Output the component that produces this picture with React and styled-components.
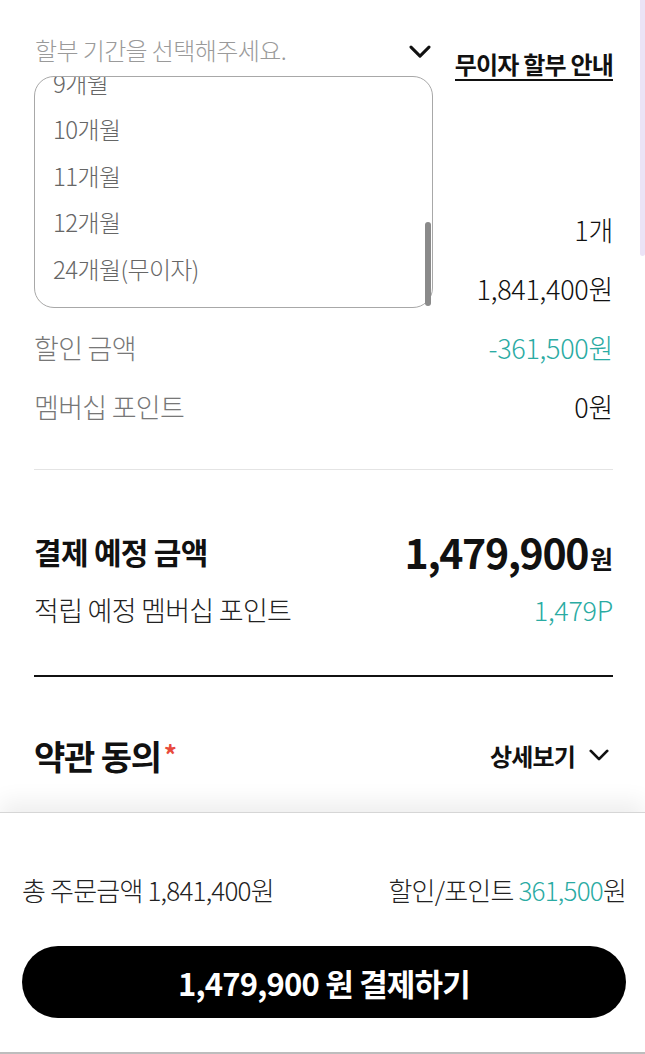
import React, { useLayoutEffect, useRef } from "react";
import styled, { createGlobalStyle } from "styled-components";

const GlobalStyle = createGlobalStyle`
  html, body {
    margin: 0;
    padding: 0;
    background: #fff;
  }
  body {
    font-family: "Noto Sans CJK KR", "Noto Sans", sans-serif;
    font-weight: 300;
    color: #111;
    overflow: hidden;
  }
  * { box-sizing: border-box; }
`;

const Page = styled.div`
  position: relative;
  width: 645px;
  height: 1054px;
  overflow: hidden;
  display: flex;
  flex-direction: column;
  background: #fff;
`;

const ScrollArea = styled.div`
  flex: 1;
  overflow: hidden;
  padding: 20px 32px 0 34px;
`;

const PageThumb = styled.div`
  position: absolute;
  top: 0;
  right: 0;
  width: 5px;
  height: 256px;
  background: #ebe3f6;
  border-radius: 0 0 3px 3px;
`;

const InstallRow = styled.div`
  display: flex;
  align-items: flex-end;
  justify-content: space-between;
  height: 60px;
`;

const SelectBox = styled.div`
  width: 399px;
  height: 60px;
  display: flex;
  align-items: center;
  justify-content: space-between;
  padding: 0 2px 2px 1px;

  svg {
    margin-top: 6px;
  }
`;

const Placeholder = styled.span`
  font-size: 24px;
  letter-spacing: -0.6px;
  color: #9a9a9a;
`;

const InfoLink = styled.a`
  font-size: 24px;
  font-weight: 700;
  letter-spacing: -0.8px;
  color: #111;
  text-decoration: none;
  line-height: 28px;
  padding-bottom: 1px;
  border-bottom: 2px solid #111;
  margin-bottom: -1px;
`;

const Dropdown = styled.div`
  position: absolute;
  top: 76px;
  left: 34px;
  width: 399px;
  height: 232px;
  background: #fff;
  border: 1px solid #a8a8a8;
  border-radius: 20px;
  z-index: 2;
`;

const OptionList = styled.ul`
  list-style: none;
  margin: 0;
  padding: 0 0 15px;
  height: 100%;
  overflow-y: scroll;
  border-radius: 20px;
  scrollbar-width: none;
  &::-webkit-scrollbar { display: none; }
`;

const Option = styled.li`
  height: 46.5px;
  display: flex;
  align-items: center;
  padding-left: 18px;
  font-size: 24px;
  letter-spacing: -0.6px;
  color: #666;
`;

const ListThumb = styled.div`
  position: absolute;
  right: 1px;
  bottom: 1px;
  width: 6px;
  height: 84px;
  background: #8a8a8a;
  border-radius: 3px;
`;

const Heading = styled.div`
  height: 120px;
  display: flex;
  align-items: center;
  font-size: 24px;
  font-weight: 700;
`;

const Row = styled.div`
  display: flex;
  align-items: center;
  justify-content: space-between;
  height: 59px;
`;

const Label = styled.span`
  font-size: ${(p) => (p.$big ? "30px" : "27px")};
  font-weight: ${(p) => (p.$big ? 700 : 300)};
  letter-spacing: -0.7px;
  color: ${(p) => p.$color || "#777"};
`;

const Value = styled.span`
  font-size: 27px;
  letter-spacing: -0.3px;
  color: ${(p) => p.$color || "#111"};
`;

const Divider = styled.hr`
  margin: 0;
  border: 0;
  border-top: ${(p) => (p.$strong ? "2px solid #111" : "1px solid #e4e4e4")};
`;

const Block = styled.div`
  padding: ${(p) => p.$pad || "0"};
`;

const TotalAmount = styled.span`
  display: flex;
  align-items: baseline;
  font-weight: 700;
  color: #111;
`;

const BigNum = styled.span`
  font-size: 41px;
  letter-spacing: -1.4px;
`;

const Won = styled.span`
  font-size: 25px;
  margin-left: 2px;
`;

const TermsRow = styled.div`
  display: flex;
  align-items: center;
  justify-content: space-between;
  height: 74px;
  margin-top: 41px;
`;

const TermsTitle = styled.span`
  font-size: 34px;
  font-weight: 700;
  letter-spacing: -1.2px;
  color: #111;
`;

const Star = styled.span`
  color: #e84a3c;
  font-size: 26px;
  margin-left: 3px;
  vertical-align: 5px;
`;

const DetailButton = styled.button`
  display: flex;
  align-items: center;
  gap: 14px;
  border: 0;
  background: none;
  padding: 0 4px 0 0;
  font-family: inherit;
  font-size: 24px;
  font-weight: 700;
  letter-spacing: -0.8px;
  color: #111;
`;

const BottomBar = styled.div`
  flex: 0 0 242px;
  border-top: 1px solid #d6d6d6;
  border-bottom: 2px solid #bdbdbd;
  box-shadow: 0 -10px 22px rgba(0, 0, 0, 0.07);
  background: #fff;
  padding: 52px 19px 0 22px;
  position: relative;
  z-index: 1;
`;

const SumRow = styled.div`
  display: flex;
  justify-content: space-between;
  align-items: center;
  height: 48px;
  font-size: 26px;
  letter-spacing: -0.8px;
  color: #222;
`;

const Teal = styled.span`
  color: #2aaba3;
`;

const PayButton = styled.button`
  display: flex;
  align-items: center;
  justify-content: center;
  width: 604px;
  height: 72px;
  margin-top: 33px;
  border: 0;
  border-radius: 36px;
  background: #000;
  color: #fff;
  font-family: inherit;
  font-size: 31px;
  font-weight: 700;
  letter-spacing: -0.8px;
`;

const Chevron = ({ size = 22 }) => (
  <svg width={size} height={size * 0.6} viewBox="0 0 22 13" fill="none">
    <path d="M2 2l9 9 9-9" stroke="#111" strokeWidth="3" strokeLinecap="round" strokeLinejoin="round" />
  </svg>
);

const options = ["일시불", "2개월", "3개월", "4개월", "5개월", "6개월", "7개월", "8개월", "9개월", "10개월", "11개월", "12개월", "24개월(무이자)"];

export default function App() {
  const listRef = useRef(null);

  useLayoutEffect(() => {
    if (listRef.current) listRef.current.scrollTop = listRef.current.scrollHeight;
  }, []);

  return (
    <>
      <GlobalStyle />
      <Page>
        <PageThumb />
        <ScrollArea>
          <InstallRow>
            <SelectBox>
              <Placeholder>할부 기간을 선택해주세요.</Placeholder>
              <Chevron />
            </SelectBox>
            <InfoLink href="#">무이자 할부 안내</InfoLink>
          </InstallRow>

          <Heading>결제 금액</Heading>
          <Row>
            <Label>주문 수량</Label>
            <Value>1개</Value>
          </Row>
          <Row>
            <Label>총 상품 금액</Label>
            <Value>1,841,400원</Value>
          </Row>
          <Row>
            <Label>할인 금액</Label>
            <Value $color="#2aaba3">-361,500원</Value>
          </Row>
          <Row>
            <Label>멤버십 포인트</Label>
            <Value>0원</Value>
          </Row>

          <Block $pad="33px 0 0">
            <Divider />
          </Block>

          <Block $pad="51px 0 36px">
            <Row>
              <Label $big $color="#111">결제 예정 금액</Label>
              <TotalAmount>
                <BigNum>1,479,900</BigNum>
                <Won>원</Won>
              </TotalAmount>
            </Row>
            <Row>
              <Label $color="#222">적립 예정 멤버십 포인트</Label>
              <Value $color="#2aaba3">1,479P</Value>
            </Row>
          </Block>
          <Divider $strong />

          <TermsRow>
            <TermsTitle>
              약관 동의<Star>*</Star>
            </TermsTitle>
            <DetailButton>
              상세보기
              <Chevron size={20} />
            </DetailButton>
          </TermsRow>
        </ScrollArea>

        <Dropdown>
          <OptionList ref={listRef}>
            {options.map((o) => (
              <Option key={o}>{o}</Option>
            ))}
          </OptionList>
          <ListThumb />
        </Dropdown>

        <BottomBar>
          <SumRow>
            <span>총 주문금액 1,841,400원</span>
            <span>
              할인/포인트 <Teal>361,500</Teal>원
            </span>
          </SumRow>
          <PayButton>1,479,900 원 결제하기</PayButton>
        </BottomBar>
      </Page>
    </>
  );
}
